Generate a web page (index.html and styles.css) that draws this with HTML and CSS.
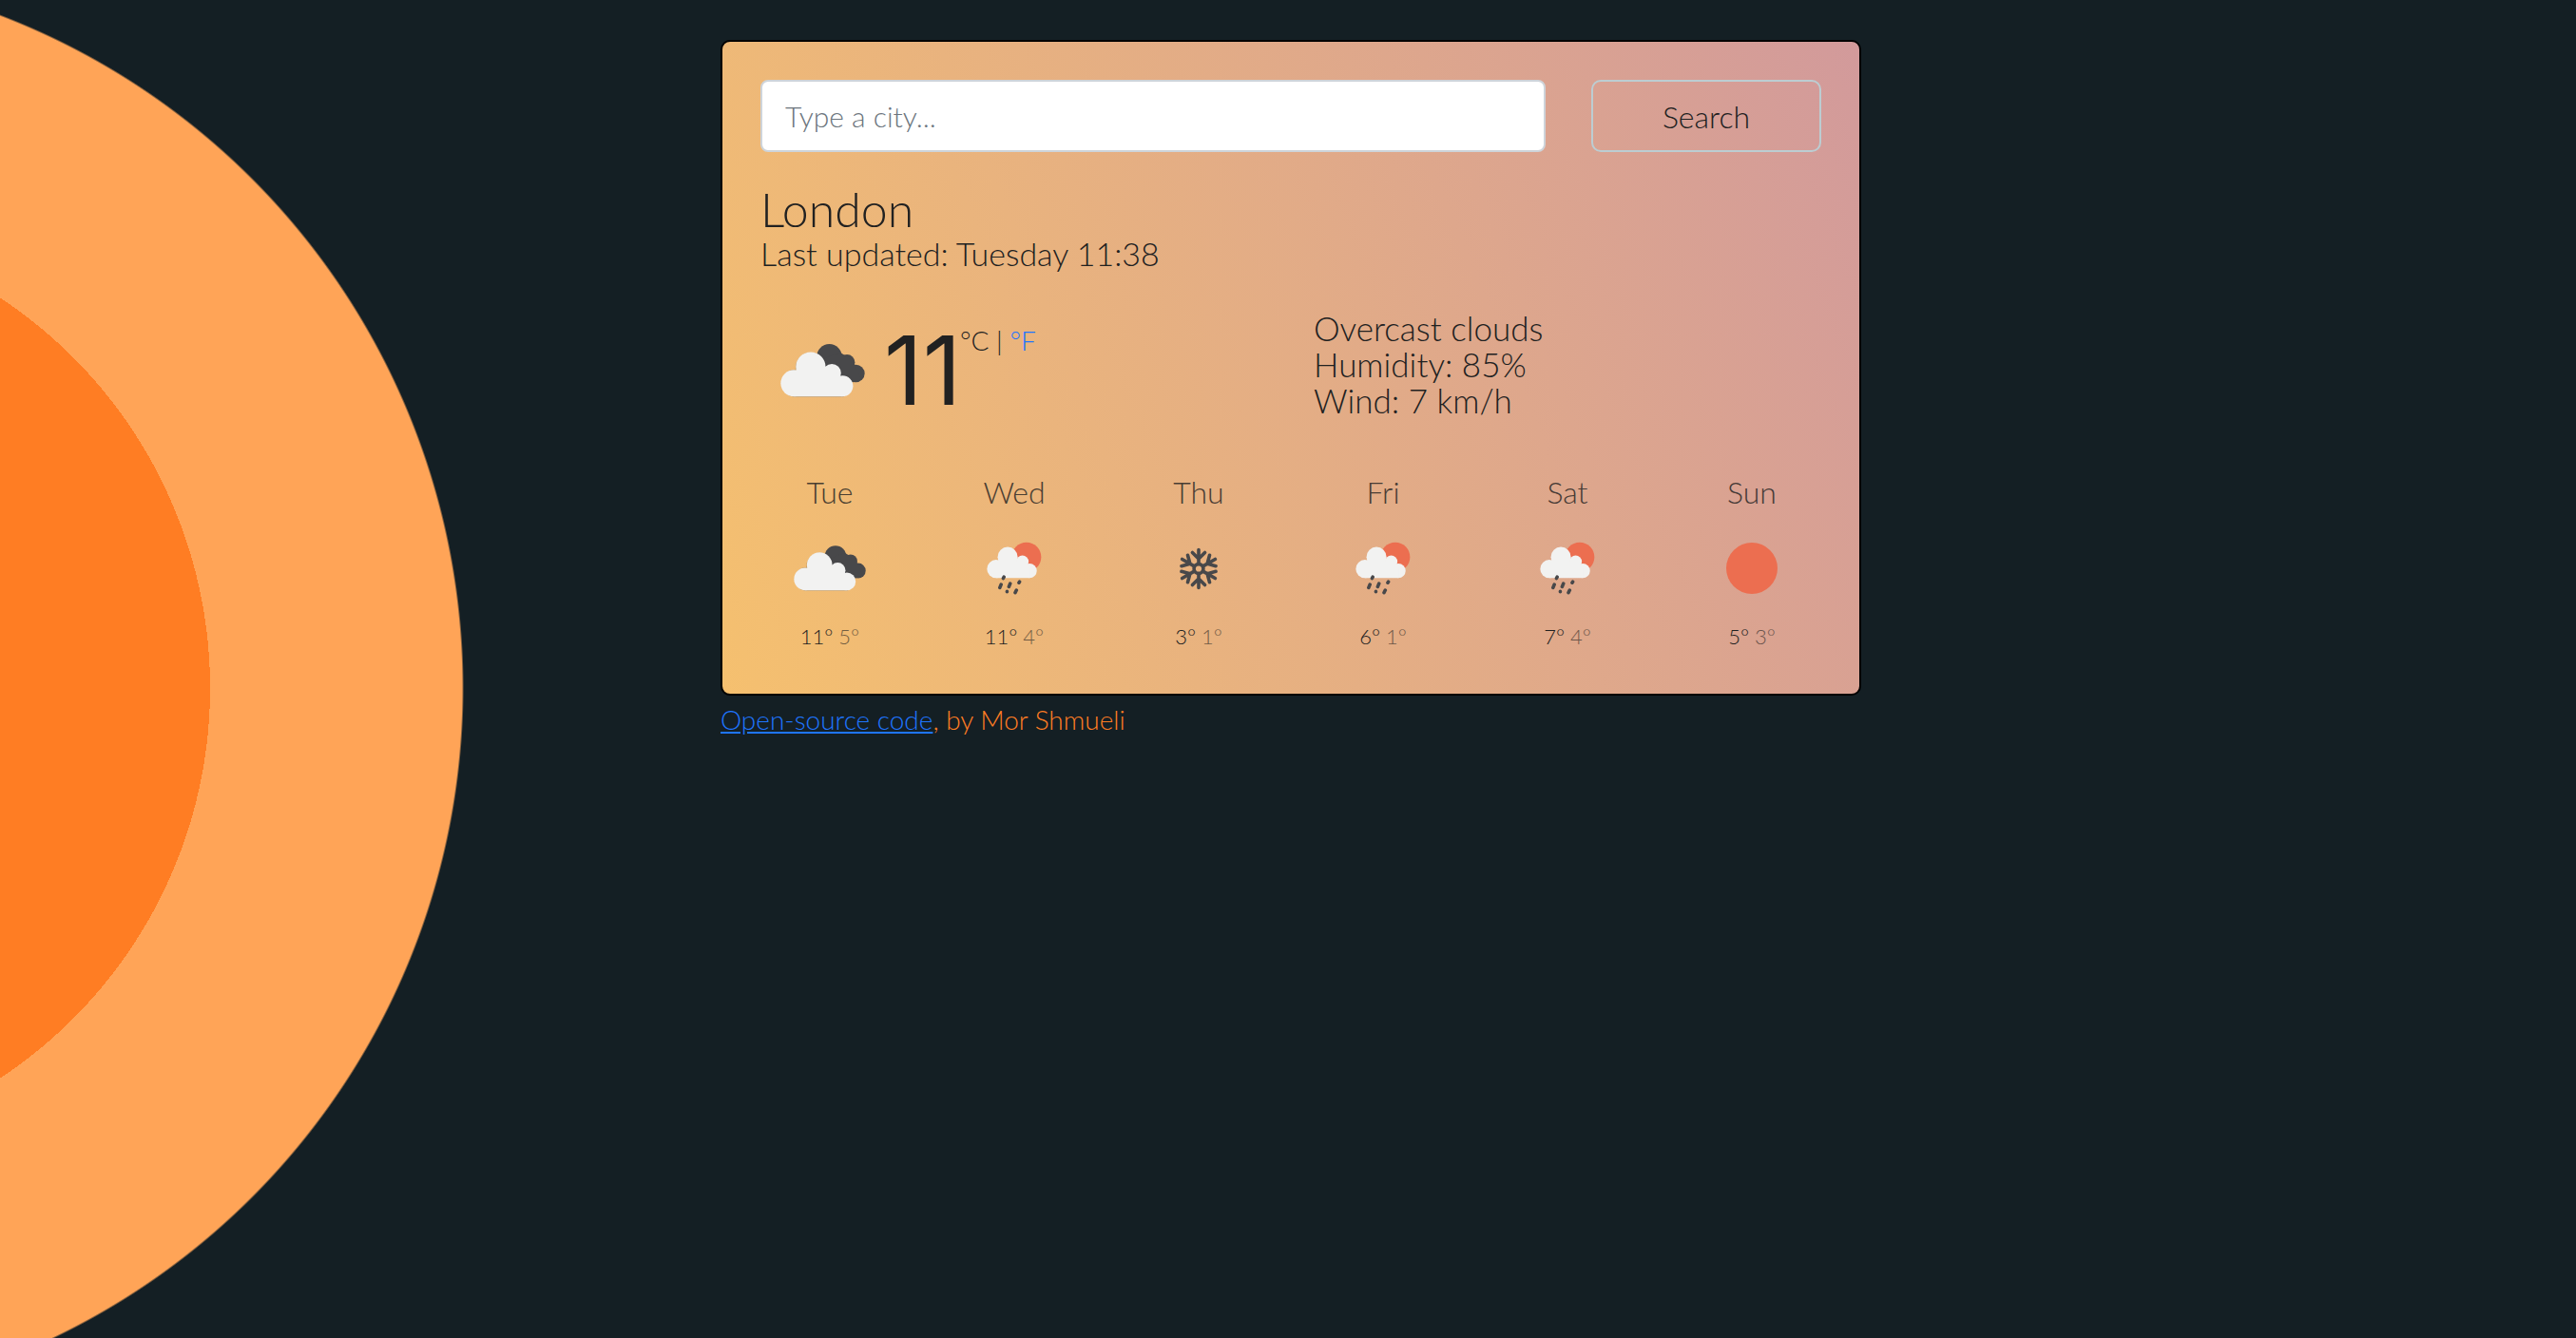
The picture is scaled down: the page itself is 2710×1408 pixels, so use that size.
FILE: index.html
```html
<!DOCTYPE html>
<html lang="en">
<head>
  <meta charset="utf-8">
  <meta name="viewport" content="width=device-width, initial-scale=1">
  <title>Weather in London</title>
  <link rel="stylesheet" href="styles.css">
</head>
<body>
  <svg class="sprite" aria-hidden="true">
    <symbol id="cloudy" viewBox="120 188 268 168">
      <g class="dark">
        <circle cx="275" cy="228" r="40"/>
        <circle cx="331" cy="246" r="25"/>
        <circle cx="359" cy="281" r="28"/>
        <path d="M240 240 L310 215 L350 240 L375 300 L350 309 L280 300 Z"/>
      </g>
      <path class="shade" d="M163 354 A42 42 0 0 1 169 270 A47 47 0 1 1 264 257 Q296 242 311 289 A33 33 0 0 1 318 354 Z"/>
      <g class="light">
        <circle cx="163" cy="312" r="42"/>
        <circle cx="216" cy="260" r="47"/>
        <circle cx="283" cy="280" r="29"/>
        <circle cx="317" cy="321" r="33"/>
        <path d="M163 280 H300 L317 310 V354 H163 Z"/>
      </g>
    </symbol>
    <symbol id="shower" viewBox="774 236 176 170">
      <circle class="sun" cx="901" cy="285" r="47"/>
      <g class="light">
        <circle cx="804" cy="323" r="29"/>
        <circle cx="841" cy="285" r="32"/>
        <circle cx="888" cy="300" r="20"/>
        <circle cx="911" cy="329" r="23"/>
        <path d="M804 300 H900 L911 320 V352 H804 Z"/>
      </g>
      <path class="drops" d="M829 349 L827 353 M820 373 L816 383 M849 370 L845 380 M879 364 L877 367 M839 395 L839 396 M869 391 L865 399"/>
    </symbol>
    <symbol id="snow" viewBox="206 254 134 136">
      <g class="flake">
        <circle cx="273" cy="322" r="15"/>
        <g id="arm"><path d="M273 306 V261 M273 290 L253 270 M273 290 L293 270"/></g>
        <use href="#arm" transform="rotate(60 273 322)"/>
        <use href="#arm" transform="rotate(120 273 322)"/>
        <use href="#arm" transform="rotate(180 273 322)"/>
        <use href="#arm" transform="rotate(240 273 322)"/>
        <use href="#arm" transform="rotate(300 273 322)"/>
      </g>
    </symbol>
    <symbol id="clear" viewBox="0 0 54 54">
      <circle class="sun" cx="27" cy="27" r="27"/>
    </symbol>
  </svg>

  <div class="container">
    <main class="card">
      <form class="search">
        <input class="search-input" type="text" placeholder="Type a city..." aria-label="City">
        <button class="search-button" type="button">Search</button>
      </form>

      <h1 class="city">London</h1>
      <p class="updated">Last updated: Tuesday 11:38</p>

      <section class="current">
        <div class="reading">
          <div class="reading-icon"><svg class="icon-cloudy-large" role="img" aria-label="Overcast clouds"><use href="#cloudy"/></svg></div>
          <strong class="temperature">11</strong>
          <span class="units">°C | <a class="unit-link" href="#">°F</a></span>
        </div>
        <ul class="details">
          <li>Overcast clouds</li>
          <li>Humidity: 85%</li>
          <li>Wind: 7 km/h</li>
        </ul>
      </section>

      <section class="forecast">
        <div class="day">
          <div class="day-name">Tue</div>
          <div class="day-icon"><svg class="icon-cloudy"><use href="#cloudy"/></svg></div>
          <div class="day-temps">11° <span class="low">5°</span></div>
        </div>
        <div class="day">
          <div class="day-name">Wed</div>
          <div class="day-icon"><svg class="icon-shower"><use href="#shower"/></svg></div>
          <div class="day-temps">11° <span class="low">4°</span></div>
        </div>
        <div class="day">
          <div class="day-name">Thu</div>
          <div class="day-icon"><svg class="icon-snow"><use href="#snow"/></svg></div>
          <div class="day-temps">3° <span class="low">1°</span></div>
        </div>
        <div class="day">
          <div class="day-name">Fri</div>
          <div class="day-icon"><svg class="icon-shower"><use href="#shower"/></svg></div>
          <div class="day-temps">6° <span class="low">1°</span></div>
        </div>
        <div class="day">
          <div class="day-name">Sat</div>
          <div class="day-icon"><svg class="icon-shower"><use href="#shower"/></svg></div>
          <div class="day-temps">7° <span class="low">4°</span></div>
        </div>
        <div class="day">
          <div class="day-name">Sun</div>
          <div class="day-icon"><svg class="icon-clear"><use href="#clear"/></svg></div>
          <div class="day-temps">5° <span class="low">3°</span></div>
        </div>
      </section>
    </main>
    <footer class="credit"><a class="credit-link" href="#">Open-source code</a>, by Mor Shmueli</footer>
  </div>
</body>
</html>
```

FILE: styles.css
```css
*,
*::before,
*::after {
  box-sizing: border-box;
}

body {
  margin: 0;
  min-height: 100vh;
  padding: 42px 0 0 6px;
  background: radial-gradient(circle at -10% 724px, #ff7d23 0, #ff7d23 492px, #ffa457 492px, #ffa457 757px, #141f24 759px);
  color: #212121;
  font-family: Lato, "Open Sans", sans-serif;
  font-weight: 300;
}

.sprite {
  position: absolute;
  width: 0;
  height: 0;
}

.container {
  max-width: 1200px;
  margin: 0 auto;
}

.card {
  padding: 40px 40px 42px;
  border: 2px solid #000;
  border-radius: 10px;
  background: linear-gradient(68deg, #f5c06f, #d29a9b);
}

.search {
  display: flex;
  gap: 48px;
  margin-bottom: 32px;
}

.search-input {
  flex: 1;
  min-width: 0;
  height: 76px;
  padding: 0 24px;
  border: 2px solid #ced4da;
  border-radius: 8px;
  background: #fff;
  color: inherit;
  font: inherit;
  font-size: 30px;
}

.search-input::placeholder {
  color: #6c757d;
  opacity: 1;
}

.search-button {
  width: 242px;
  border: 2px solid #bccdd2;
  border-radius: 10px;
  background: transparent;
  color: inherit;
  font: inherit;
  font-size: 32px;
}

.city {
  margin: 0;
  font-size: 50px;
  font-weight: 300;
  line-height: 56px;
}

.updated {
  margin: 0 0 40px;
  font-size: 34px;
  line-height: 38px;
}

.current {
  display: grid;
  grid-template-columns: 1fr 1fr;
  gap: 48px;
  margin-bottom: 44px;
}

.reading {
  display: flex;
  align-items: center;
  height: 128px;
}

.reading-icon {
  display: flex;
  justify-content: center;
  width: 130px;
}

.temperature {
  width: 80px;
  font-family: Inter, sans-serif;
  font-size: 100px;
  font-weight: 400;
  line-height: 128px;
}

.units {
  align-self: flex-start;
  margin-top: 12px;
  font-size: 28px;
  line-height: 40px;
}

.unit-link {
  color: #1f75ff;
  text-decoration: none;
}

.details {
  margin: 0;
  padding: 0;
  list-style: none;
  font-size: 35px;
  line-height: 38px;
}

.forecast {
  display: grid;
  grid-template-columns: repeat(6, 1fr);
  margin: 0 -24px;
  text-align: center;
}

.day-name {
  font-size: 32px;
  line-height: 40px;
  opacity: 0.8;
}

.day-icon {
  display: flex;
  align-items: center;
  justify-content: center;
  height: 100px;
  margin: 10px 0 4px;
}

.day-temps {
  font-size: 22px;
  line-height: 36px;
}

.low {
  opacity: 0.6;
}

.icon-cloudy-large {
  width: 89px;
  height: 56px;
}

.icon-cloudy {
  width: 76px;
  height: 48px;
}

.icon-shower {
  width: 58px;
  height: 56px;
}

.icon-snow {
  width: 44px;
  height: 45px;
}

.icon-clear {
  width: 54px;
  height: 54px;
}

.light {
  fill: #f2f2f1;
}

.dark {
  fill: #48484a;
}

.shade {
  fill: none;
  stroke: #303033;
  stroke-width: 1;
}

.sun {
  fill: #ec6e50;
}

.drops,
.flake {
  fill: none;
  stroke: #48484a;
  stroke-width: 11;
  stroke-linecap: round;
}

.credit {
  margin-top: 6px;
  color: #ff7d23;
  font-size: 28px;
  line-height: 38px;
}

.credit-link {
  color: #1f75ff;
}
```
